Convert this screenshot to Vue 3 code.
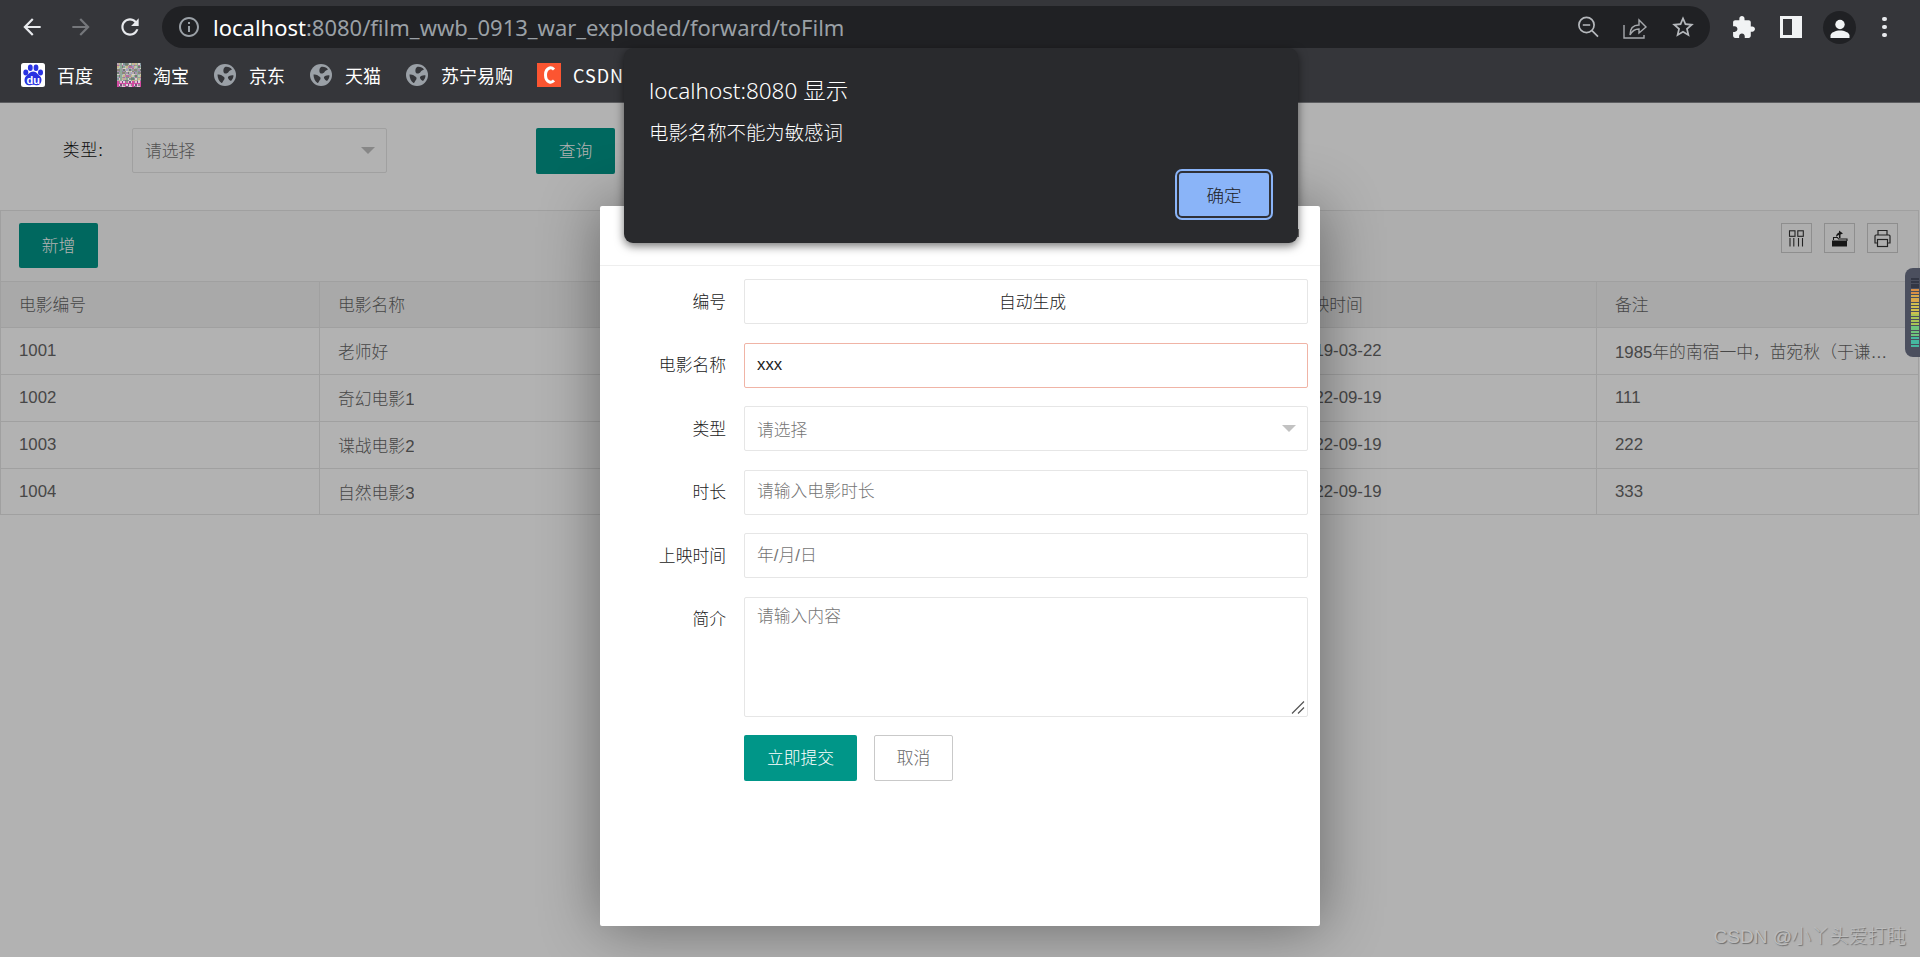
<script setup>
const bookmarks = [
  { name: '百度', icon: 'baidu' },
  { name: '淘宝', icon: 'noise' },
  { name: '京东', icon: 'globe' },
  { name: '天猫', icon: 'globe' },
  { name: '苏宁易购', icon: 'globe' },
  { name: 'CSDN', icon: 'csdn' }
]
const palette = ['#b9a7b0', '#8fa898', '#a78fb0', '#c8b88c', '#7f9398', '#d8d2c8', '#8d857a', '#b46e98', '#9fa8c0', '#6f7f72', '#c0c8b0']
const noise = []
for (let y = 0; y < 16; y++) {
  for (let x = 0; x < 16; x++) {
    const hot = y > 11
    const c = hot ? ['#d24aa0', '#e0d0e0', '#7a4a80', '#f0b0d8', '#909090'][(x * 7 + y * 5 + x * y) % 5] : palette[(x * x * 3 + y * 7 + x * y * 2) % 11]
    noise.push({ x: x * 1.5, y: y * 1.5, c })
  }
}
const columns = ['电影编号', '电影名称', '类型', '时长', '上映时间', '备注']
const rows = [
  ['1001', '老师好', '剧情', '113', '2019-03-22', '1985年的南宿一中，苗宛秋（于谦饰）从北京的名牌大学毕业'],
  ['1002', '奇幻电影1', '奇幻', '120', '2022-09-19', '111'],
  ['1003', '谍战电影2', '谍战', '120', '2022-09-19', '222'],
  ['1004', '自然电影3', '自然', '120', '2022-09-19', '333']
]
const meterBands = [[4, '#333745'], [2, '#d98f45'], [3, '#d9a84a'], [4, '#cfc04e'], [4, '#a9c455'], [4, '#6fc47c'], [4, '#45b8a0']]
const meter = []
for (const [n, c] of meterBands) {
  for (let i = 0; i < n; i++) meter.push(c)
}
</script>

<template>
  <div class="root">
    <header class="chrome">
      <div class="toolbar">
        <button class="nav first" aria-label="后退">
          <svg width="26" height="26" viewBox="0 0 24 24"><path fill="#e8eaed" d="M20 11H7.830l5.590-5.590L12 4l-8 8 8 8 1.410-1.410L7.830 13H20v-2z"/></svg>
        </button>
        <button class="nav" aria-label="前进">
          <svg width="26" height="26" viewBox="0 0 24 24"><path fill="#75777b" d="M12 4l-1.410 1.410L16.170 11H4v2h12.170l-5.580 5.590L12 20l8-8z"/></svg>
        </button>
        <button class="nav" aria-label="刷新">
          <svg width="26" height="26" viewBox="0 0 24 24"><path fill="#e8eaed" d="M17.650 6.350C16.200 4.900 14.210 4 12 4c-4.420 0-7.990 3.580-7.990 8s3.570 8 7.990 8c3.730 0 6.840-2.550 7.730-6h-2.080c-.82 2.330-3.040 4-5.650 4-3.310 0-6-2.690-6-6s2.690-6 6-6c1.660 0 3.140.69 4.220 1.780L13 11h7V4l-2.350 2.350z"/></svg>
        </button>
        <div class="omnibox">
          <svg class="info" width="24" height="24" viewBox="0 0 24 24"><path fill="#9aa0a6" d="M11 7h2v2h-2zm0 4h2v6h-2zm1-9C6.480 2 2 6.480 2 12s4.480 10 10 10 10-4.480 10-10S17.520 2 12 2zm0 18c-4.410 0-8-3.590-8-8s3.590-8 8-8 8 3.590 8 8-3.590 8-8 8z"/></svg>
          <div class="url"><span class="host">localhost</span>:8080/film_wwb_0913_war_exploded/forward/toFilm</div>
          <div class="omni-icons">
            <svg width="24" height="24" viewBox="0 0 24 24" fill="none" stroke="#b5b8bc" stroke-width="1.700"><circle cx="10.500" cy="10" r="7.600"/><path d="M6.800 10h7.400M16 15.600l6 6"/></svg>
            <svg width="26" height="26" viewBox="0 0 26 26" fill="none" stroke="#a6a9ad" stroke-width="1.400"><path d="M2 11v13h20v-3"/><path d="M8 21c0-6 3-10 9-10V6l7 7-7 6v-4c-4 0-7 2-9 6z"/></svg>
            <svg width="26" height="26" viewBox="0 0 24 24"><path fill="#b5b8bc" d="M22 9.240l-7.190-.62L12 2 9.190 8.630 2 9.240l5.460 4.730L5.820 21 12 17.270 18.180 21l-1.630-7.030L22 9.240zM12 15.400l-3.760 2.270 1-4.280-3.320-2.880 4.380-.38L12 6.100l1.710 4.040 4.380.38-3.320 2.880 1 4.280L12 15.400z"/></svg>
          </div>
        </div>
        <div class="ext">
          <svg width="25" height="25" viewBox="0 0 24 24"><path fill="#f1f3f4" d="M20.500 11H19V7c0-1.100-.9-2-2-2h-4V3.500C13 2.120 11.880 1 10.500 1S8 2.120 8 3.500V5H4c-1.100 0-1.990.9-1.990 2v3.800H3.500c1.490 0 2.700 1.210 2.700 2.700s-1.210 2.700-2.700 2.700H2V20c0 1.100.9 2 2 2h3.800v-1.500c0-1.490 1.210-2.700 2.700-2.700 1.490 0 2.700 1.210 2.700 2.700V22H17c1.100 0 2-.9 2-2v-4h1.500c1.380 0 2.500-1.120 2.500-2.500S21.880 11 20.500 11z"/></svg>
          <svg width="22" height="22" viewBox="0 0 22 22"><path fill="#f1f3f4" fill-rule="evenodd" d="M0 0h22v22H0zM3 3v16h9V3z"/></svg>
          <div class="avatar">
            <svg width="22" height="22" viewBox="0 0 22 22"><circle cx="11" cy="6.500" r="4.700" fill="#f1f3f4"/><path fill="#f1f3f4" d="M1.500 20v-2.500C1.500 14.500 7 12.500 11 12.500s9.500 2 9.500 5V20z"/></svg>
          </div>
          <div class="dots"><i></i><i></i><i></i></div>
        </div>
      </div>
      <div class="bookmarks">
        <div v-for="b in bookmarks" :key="b.name" class="bm">
          <svg v-if="b.icon === 'baidu'" width="24" height="24" viewBox="0 0 24 24">
            <rect width="24" height="24" rx="2.500" fill="#fff"/>
            <g fill="#2932e1">
              <ellipse cx="4.800" cy="9.500" rx="2.500" ry="3"/>
              <ellipse cx="9.300" cy="4.800" rx="2.400" ry="3.200"/>
              <ellipse cx="15" cy="4.800" rx="2.400" ry="3.200"/>
              <ellipse cx="19.500" cy="9.500" rx="2.500" ry="3"/>
              <path d="M12.200 8.500c3.300 0 4.500 3 6.800 4.800 2.800 2.300 1.700 9-3 9-1.500 0-2.500-.5-3.800-.5s-2.500.5-4.200.5c-4.700 0-5.700-6.500-3-9 2.300-1.800 3.900-4.800 7.200-4.800z"/>
            </g>
            <text x="12.200" y="20.500" font-size="11" font-weight="700" fill="#fff" text-anchor="middle" font-family="'Liberation Sans',sans-serif">du</text>
          </svg>
          <svg v-else-if="b.icon === 'noise'" width="24" height="24" viewBox="0 0 24 24" shape-rendering="crispEdges">
            <rect v-for="(n, i) in noise" :key="i" :x="n.x" :y="n.y" width="1.500" height="1.500" :fill="n.c"/>
          </svg>
          <svg v-else-if="b.icon === 'globe'" class="globe" width="22" height="22" viewBox="0 0 22 22">
            <circle cx="11" cy="11" r="11" fill="#9aa0a6"/>
            <path fill="#35363a" d="M11 3c3-.5 5.500.5 7 2.500-1.500 1-2.500 1-3.500 2.500-1 1.500-3 2-4.500 1-1-1.500-1-4.500 1-6zM3.500 10.500c2.500-.5 5 1 6.500 2.500 1 1 .5 2.500-.5 3.500-1 1.500-1 2.800-2 2.500-2.500-1.500-4-5-4-8.500zM15 12c1.500-.5 3.500-1 4.500-.5 0 2-1 4-2.500 5.500-1-.5-2.500-1.500-3-3-.2-.8.2-1.500 1-2z"/>
          </svg>
          <svg v-else width="24" height="24" viewBox="0 0 24 24">
            <rect width="24" height="24" fill="#fc5531"/>
            <path d="M17 6.500c-1.500-1.500-3-2-4.500-1.500C9.500 6 8.500 9 8.500 12s1 6 4 7c1.500.5 3 0 4.500-1.500" fill="none" stroke="#fff" stroke-width="3"/>
          </svg>
          <span>{{ b.name }}</span>
        </div>
      </div>
    </header>

    <main class="page">
      <section class="filter">
        <label class="filter-label">类型:</label>
        <div class="select filter-select">
          <span>请选择</span>
          <i class="caret"></i>
        </div>
        <button class="btn filter-btn">查询</button>
      </section>
      <section class="grid-wrap">
        <div class="grid-tools">
          <button class="btn">新增</button>
          <div class="tool-icons">
            <div class="tool">
              <svg width="17" height="17" viewBox="0 0 17 17" fill="none" stroke="#333" stroke-width="1.100"><rect x="1.500" y=".8" width="5.500" height="5.500"/><rect x="9.800" y=".8" width="5.500" height="5.500"/><path d="M2 8v8.500M5.800 8v8.500M10.500 8v8.500M14.500 8v8.500"/></svg>
            </div>
            <div class="tool">
              <svg width="17" height="17" viewBox="0 0 17 17"><path fill="#222" d="M1 10.500h15v6H1z"/><path fill="none" stroke="#222" stroke-width="1.100" d="M2.500 10V7.500h4l1 1.500H16v2"/><path fill="#222" d="M8 .5l4 3-2.500 1V8H8V5C7 5 6 6 5 7c0-2 1-4 3-4.500z"/></svg>
            </div>
            <div class="tool">
              <svg width="19" height="19" viewBox="0 0 19 19" fill="none" stroke="#333" stroke-width="1.200"><path d="M5 6V1.500h9V6"/><path d="M4.500 14H2V7a1 1 0 0 1 1-1h13a1 1 0 0 1 1 1v7h-2.500"/><rect x="4.500" y="10.500" width="10" height="7"/></svg>
            </div>
          </div>
        </div>
        <div class="row head">
          <div v-for="c in columns" :key="c" class="cell">{{ c }}</div>
        </div>
        <div v-for="r in rows" :key="r[0]" class="row">
          <div v-for="(v, i) in r" :key="i" class="cell"><span class="ell">{{ v }}</span></div>
        </div>
      </section>
      <div class="shade"></div>
    </main>

    <section class="dialog">
      <div class="dialog-head"><i class="close"></i></div>
      <form class="dialog-form">
        <div class="f-row">
          <label>编号</label>
          <div class="auto">自动生成</div>
        </div>
        <div class="f-row">
          <label>电影名称</label>
          <input class="inp err" value="xxx" />
        </div>
        <div class="f-row">
          <label>类型</label>
          <div class="select dlg-select">
            <span>请选择</span>
            <i class="caret"></i>
          </div>
        </div>
        <div class="f-row">
          <label>时长</label>
          <input class="inp" placeholder="请输入电影时长" />
        </div>
        <div class="f-row">
          <label>上映时间</label>
          <input class="inp" placeholder="年/月/日" />
        </div>
        <div class="f-row area">
          <label>简介</label>
          <textarea class="inp ta" placeholder="请输入内容"></textarea>
          <svg class="grip" width="14" height="13" viewBox="0 0 14 13" fill="none" stroke="#555" stroke-width="1.200"><path d="M13 .5L1 12.500M13 6.500L7 12.500"/></svg>
        </div>
        <div class="f-row actions">
          <button type="button" class="btn submit">立即提交</button>
          <button type="button" class="btn ghost">取消</button>
        </div>
      </form>
    </section>

    <section class="alert">
      <div class="alert-title">localhost:8080 显示</div>
      <div class="alert-msg">电影名称不能为敏感词</div>
      <div class="alert-foot"><button class="alert-ok">确定</button></div>
    </section>

    <div class="meter">
      <i v-for="(c, i) in meter" :key="i" :style="{ background: c }"></i>
    </div>
    <div class="mark">CSDN @小丫头爱打盹</div>
  </div>
</template>

<style>
html, body { margin: 0; background: #fff; overflow: hidden; }
</style>

<style scoped>
.root {
  position: relative;
  width: 1920px;
  height: 957px;
  overflow: hidden;
  font-family: "Liberation Sans", "Noto Sans CJK SC", sans-serif;
  font-size: 16.8px;
  font-weight: 300;
  color: #666;
}
button { font-family: inherit; font-weight: inherit; }
.chrome { background: #35363a; border-bottom: 1px solid #5c5d60; height: 102px; }
.toolbar { height: 54px; display: flex; align-items: center; }
.nav {
  width: 26px; height: 26px; padding: 0; background: none; border: 0;
  margin-left: 23px;
}
.nav.first { margin-left: 19px; }
.omnibox {
  margin-left: 19px;
  width: 1548px; height: 42px;
  background: #202124;
  border-radius: 21px;
  display: flex; align-items: center;
  box-sizing: border-box;
  padding-left: 15px;
}
.info { flex: none; }
.url {
  margin-left: 12px;
  font-family: "Noto Sans", sans-serif;
  font-size: 22px;
  font-weight: 400;
  color: #9aa0a6;
  white-space: nowrap;
}
.host { color: #fff; }
.omni-icons {
  margin-left: auto; margin-right: 14px;
  display: flex; align-items: center; gap: 22px;
}
.ext { display: flex; align-items: center; height: 42px; margin-left: 21px; }
.ext > svg:nth-child(2) { margin-left: 24px; }
.avatar {
  width: 33px; height: 33px; border-radius: 50%; background: #202124;
  margin-left: 21px; display: flex; align-items: center; justify-content: center;
}
.avatar svg { margin-top: 3px; }
.dots { margin-left: 26px; display: flex; flex-direction: column; gap: 3.500px; }
.dots i { width: 4.500px; height: 4.500px; border-radius: 50%; background: #e8eaed; display: block; }
.bookmarks {
  height: 48px; box-sizing: border-box; padding: 0 0 6px 21px;
  display: flex; align-items: center; gap: 24px;
  color: #fff; font-size: 18px; font-weight: 400;
  font-family: "Noto Sans CJK SC", "Liberation Sans", sans-serif;
}
.bm { display: flex; align-items: center; gap: 12px; white-space: nowrap; }
.bm:last-child span { letter-spacing: 1px; }
.globe { margin: 0 1px; }
.page { position: relative; height: 854px; background: #fff; }
.shade { position: absolute; inset: 0; background: rgba(0, 0, 0, .3); }
.filter { height: 107px; box-sizing: border-box; padding-top: 25px; display: flex; align-items: flex-start; }
.filter-label { width: 104px; text-align: right; height: 45px; line-height: 45px; color: #111; letter-spacing: 1px; }
.select {
  box-sizing: border-box; height: 45px; padding: 0 0 2px 12px;
  border: 1px solid #e6e6e6; border-radius: 2px;
  display: flex; align-items: center; justify-content: space-between;
  color: #757575; background: #fff;
}
.caret {
  width: 0; height: 0;
  border-left: 7px solid transparent; border-right: 7px solid transparent;
  border-top: 7.500px solid #c2c2c2;
  margin-right: 11px; margin-top: 2px;
}
.filter-select { width: 255px; margin-left: 28px; }
.btn {
  height: 46px; padding: 0 22px 2px; border: 0; border-radius: 2px;
  background: #009688; color: #fff; font-size: 16.8px; white-space: nowrap;
}
.filter-btn { margin-left: 149px; width: 79px; }
.grid-wrap { border: 1px solid #e6e6e6; border-bottom: 0; margin: 0 1px 0 0; }
.grid-tools {
  height: 71px; box-sizing: border-box; padding: 12px 20px 0 18px;
  display: flex; justify-content: space-between; align-items: flex-start;
  border-bottom: 1px solid #e6e6e6;
  background: #fafafa;
}
.grid-tools .btn { width: 79px; height: 45px; padding: 0 0 2px; }
.tool-icons { display: flex; gap: 12px; }
.tool {
  width: 31px; height: 30px; box-sizing: border-box;
  border: 1px solid #ccc;
  display: flex; align-items: center; justify-content: center;
}
.row {
  display: grid; grid-template-columns: 318px repeat(4, 319.25px) 1fr;
  height: 47px; box-sizing: border-box;
  border-bottom: 1px solid #e6e6e6;
}
.row:last-child { height: 46px; }
.head { background: #f2f2f2; height: 46px; }
.head .cell { padding-bottom: 2px; }
.cell {
  display: flex; align-items: center; min-width: 0;
  padding: 0 24px 0 18px;
  border-left: 1px solid #e6e6e6;
}
.cell:first-child { border-left: 0; padding-left: 18px; }
.ell { white-space: nowrap; overflow: hidden; text-overflow: ellipsis; }

.dialog {
  position: absolute; left: 600px; top: 206px;
  width: 720px; height: 720px;
  background: #fff; border-radius: 2px;
  box-shadow: 1px 1px 60px rgba(0, 0, 0, .42);
}
.dialog-head { position: relative; height: 60px; border-bottom: 1px solid #eee; box-sizing: border-box; }
.close {
  position: absolute; left: 697px; top: 23px; width: 2px; height: 8px;
  background: #777;
}
.dialog-form {
  padding: 13px 12px 0 0;
  display: flex; flex-direction: column; gap: 18.600px;
}
.f-row { display: flex; align-items: center; height: 45px; }
.f-row label { width: 126px; text-align: right; margin-right: 18px; color: #222; flex: none; padding-bottom: 2px; }
.inp, .auto, .dlg-select {
  width: 564px; height: 45px; box-sizing: border-box;
  border: 1px solid #e6e6e6; border-radius: 2px;
  font: inherit; color: #222; background: #fff; outline: 0;
}
.inp { padding: 0 12px; }
.inp::placeholder, .dlg-select span { color: #757575; }
.err { border-color: #f0b4a6; }
.auto { padding: 0 0 2px 13px; display: flex; align-items: center; justify-content: center; }
.dlg-select { padding: 0 0 0 12px; }
.dlg-select .caret { margin-top: 0; }
.area { position: relative; height: 120px; align-items: flex-start; }
.area label { margin-top: 9px; line-height: 28px; }
.ta { height: 120px; padding: 6px 12px; line-height: 1.500; display: block; resize: none; }
.grip { position: absolute; right: 3px; bottom: 3px; }
.actions { padding-left: 144px; gap: 17px; height: 46px; margin-top: -1px; }
.submit { width: 113px; padding: 0 0 2px; }
.ghost {
  width: 79px; padding: 0 0 2px; background: #fff; color: #666;
  border: 1px solid #c9c9c9;
}

.alert {
  position: absolute; left: 624px; top: 48px;
  width: 674px; height: 195px; box-sizing: border-box;
  background: #292a2d; border-radius: 9px;
  padding: 26px 24px 0 25px;
  box-shadow: 0 3px 10px rgba(0, 0, 0, .55);
  font-family: "Noto Sans", "Noto Sans CJK SC", sans-serif;
}
.alert-title { font-size: 22.500px; line-height: 34px; color: #fff; white-space: nowrap; }
.alert-msg { font-size: 19.400px; line-height: 28px; margin-top: 11px; color: #fff; }
.alert-foot { position: absolute; right: 27px; bottom: 25px; }
.alert-ok {
  width: 94px; height: 47px; box-sizing: border-box; display: block;
  background: #8ab4f8; color: #202124; font-size: 17.600px;
  border: 2px solid #2f3138; border-radius: 5px;
  box-shadow: 0 0 0 2px #8ab4f8;
  padding: 0;
}
.meter {
  position: absolute; left: 1905px; top: 268px;
  width: 15px; height: 89px; box-sizing: border-box;
  background: #4b4f5e; border-radius: 8px 0 0 8px;
  padding: 10px 0 0 6px;
  display: flex; flex-direction: column; gap: .8px;
}
.meter i { display: block; height: 2px; width: 8px; }
.mark {
  position: absolute; right: 14px; top: 925px;
  font-size: 19px; line-height: 24px; white-space: nowrap;
  color: #bdbdbd; text-shadow: 1px 1px 1px #6e6e6e;
}
</style>
